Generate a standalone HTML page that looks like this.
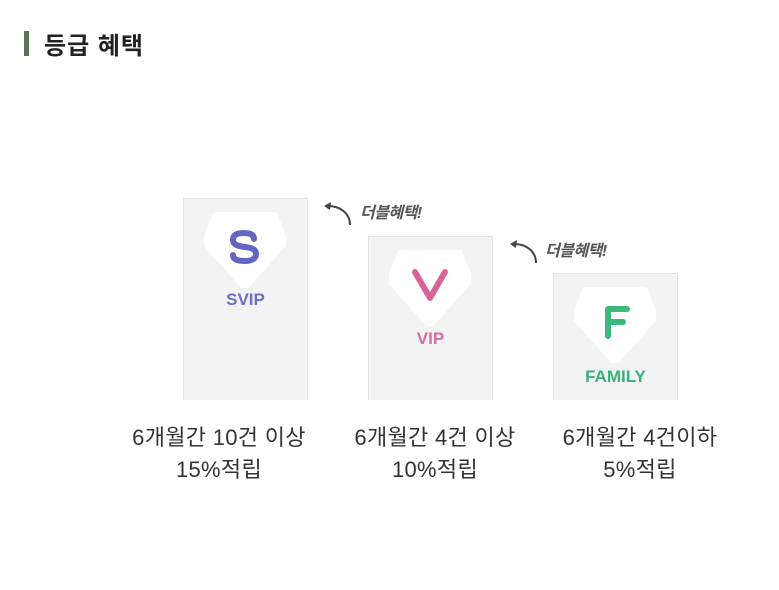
<!DOCTYPE html>
<html><head><meta charset="utf-8"><style>
body{margin:0;width:779px;height:590px;background:#fff;position:relative;font-family:"Liberation Sans","Noto Sans CJK KR",sans-serif;overflow:hidden}
.bar{position:absolute;left:24px;top:31px;width:5px;height:25px;background:#5b7355}
.title{position:absolute;left:44px;top:26px;font-size:24px;font-weight:bold;color:#222;letter-spacing:1px}
.card{position:absolute;width:123px;background:#f3f3f3;border:1px solid #e2e2e2;border-bottom:none}
.card svg{position:absolute;left:20px;top:13px}
.lbl{position:absolute;left:0;width:123px;text-align:center;font-weight:bold;font-size:17px}
.cap{position:absolute;width:240px;text-align:center;font-size:22px;color:#333;line-height:32px;letter-spacing:0.3px}
.dbl{position:absolute;font-size:16px;color:#555;font-weight:bold;font-style:italic;letter-spacing:-0.5px}
</style></head><body>
<div class="bar"></div><div class="title">등급 혜택</div>

<div class="card" style="left:183px;top:198px;height:201px">
<svg width="82" height="76" viewBox="0 0 82 76"><path d="M12 4 H70 L80 30 L41 74 L2 30 Z" fill="#fff" stroke="#fff" stroke-width="8" stroke-linejoin="round"/>
<path d="M50 27 C50 22 45 21 40 21 C33 21 29 23 29 28 C29 33 34 34 41 35 C48 36 52 37 52 42 C52 47 47 49 41 49 C35 49 29 48 29 43" fill="none" stroke="#6467c2" stroke-width="6" stroke-linecap="round"/></svg>
<div class="lbl" style="top:91px;color:#6a6fc4">SVIP</div></div>

<div class="card" style="left:368px;top:236px;height:163px">
<svg width="82" height="76" viewBox="0 0 82 76"><path d="M12 4 H70 L80 30 L41 74 L2 30 Z" fill="#fff" stroke="#fff" stroke-width="8" stroke-linejoin="round"/>
<path d="M26 22 L41 48 L56 22" fill="none" stroke="#d8649a" stroke-width="6" stroke-linecap="round" stroke-linejoin="round"/></svg>
<div class="lbl" style="top:92px;color:#d96c9e">VIP</div></div>

<div class="card" style="left:553px;top:273px;height:126px">
<svg width="82" height="76" viewBox="0 0 82 76"><path d="M12 4 H70 L80 30 L41 74 L2 30 Z" fill="#fff" stroke="#fff" stroke-width="8" stroke-linejoin="round"/>
<path d="M53 22 H34 V49 M34 35 H49" fill="none" stroke="#3cb87a" stroke-width="6" stroke-linecap="round" stroke-linejoin="round"/></svg>
<div class="lbl" style="top:93px;color:#3ab07a">FAMILY</div></div>

<svg style="position:absolute;left:320px;top:198px" width="36" height="30"><path d="M30 27 C30 15 20 8 8 8" fill="none" stroke="#444" stroke-width="2"/><path d="M4 8 L11 4 L10 12 Z" fill="#444"/></svg>
<div class="dbl" style="left:360px;top:199px">더블혜택!</div>
<svg style="position:absolute;left:506px;top:236px" width="36" height="30"><path d="M30 27 C30 15 20 8 8 8" fill="none" stroke="#444" stroke-width="2"/><path d="M4 8 L11 4 L10 12 Z" fill="#444"/></svg>
<div class="dbl" style="left:545px;top:237px">더블혜택!</div>

<div class="cap" style="left:99px;top:422px">6개월간 10건 이상<br>15%적립</div>
<div class="cap" style="left:315px;top:422px">6개월간 4건 이상<br>10%적립</div>
<div class="cap" style="left:520px;top:422px">6개월간 4건이하<br>5%적립</div>
</body></html>
